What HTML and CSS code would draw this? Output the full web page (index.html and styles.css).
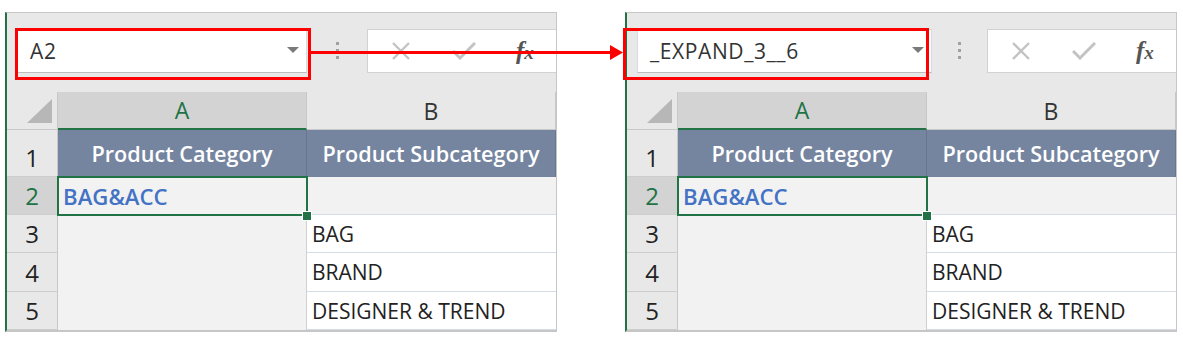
FILE: index.html
```html
<!DOCTYPE html>
<html lang="en">
<head>
  <meta charset="UTF-8" />
  <title>Name Box - Before / After</title>
  <link rel="stylesheet" href="styles.css">
</head>
<body>
  <div class="stage">

    <section class="sheet">
      <div class="toolbar">
        <div class="namebox narrow">
          <span>A2</span>
          <i class="caret"></i>
        </div>
        <div class="sep"><i></i><i></i><i></i></div>
        <div class="formula">
          <svg class="ico" width="20" height="18" viewBox="0 0 20 18"><path d="M2 1 L18 17 M18 1 L2 17" stroke="#c3c3c3" stroke-width="2.4" fill="none"/></svg>
          <svg class="ico" width="24" height="18" viewBox="0 0 24 18"><path d="M1 9 L8 16 L23 1" stroke="#c3c3c3" stroke-width="3" fill="none"/></svg>
          <span class="fx">f<small>x</small></span>
        </div>
      </div>
      <div class="grid">
        <div class="corner"><i></i></div>
        <div class="colhead on">A</div>
        <div class="colhead">B</div>

        <div class="rowhead">1</div>
        <div class="cell title">Product Category</div>
        <div class="cell title">Product Subcategory</div>

        <div class="rowhead on">2</div>
        <div class="cell shade sel">BAG&amp;ACC</div>
        <div class="cell shade colb"></div>

        <div class="rowhead">3</div>
        <div class="cell shade merged"></div>
        <div class="cell colb">BAG</div>
        <div class="rowhead">4</div>
        <div class="cell colb">BRAND</div>
        <div class="rowhead">5</div>
        <div class="cell colb">DESIGNER &amp; TREND</div>
      </div>
      <div class="callout left"></div>
    </section>

    <section class="sheet">
      <div class="toolbar">
        <div class="namebox wide">
          <span>_EXPAND_3__6</span>
          <i class="caret"></i>
        </div>
        <div class="sep"><i></i><i></i><i></i></div>
        <div class="formula">
          <svg class="ico" width="20" height="18" viewBox="0 0 20 18"><path d="M2 1 L18 17 M18 1 L2 17" stroke="#c3c3c3" stroke-width="2.4" fill="none"/></svg>
          <svg class="ico" width="24" height="18" viewBox="0 0 24 18"><path d="M1 9 L8 16 L23 1" stroke="#c3c3c3" stroke-width="3" fill="none"/></svg>
          <span class="fx">f<small>x</small></span>
        </div>
      </div>
      <div class="grid">
        <div class="corner"><i></i></div>
        <div class="colhead on">A</div>
        <div class="colhead">B</div>

        <div class="rowhead">1</div>
        <div class="cell title">Product Category</div>
        <div class="cell title">Product Subcategory</div>

        <div class="rowhead on">2</div>
        <div class="cell shade sel">BAG&amp;ACC</div>
        <div class="cell shade colb"></div>

        <div class="rowhead">3</div>
        <div class="cell shade merged"></div>
        <div class="cell colb">BAG</div>
        <div class="rowhead">4</div>
        <div class="cell colb">BRAND</div>
        <div class="rowhead">5</div>
        <div class="cell colb">DESIGNER &amp; TREND</div>
      </div>
      <div class="callout right"></div>
    </section>

    <!-- arrow from the first name box to the second -->
    <svg class="arrow" width="314" height="16" viewBox="0 0 314 16">
      <rect x="0" y="6" width="302" height="3" fill="#ff0000"/>
      <polygon points="300,0 313,7.5 300,15" fill="#ff0000"/>
    </svg>
  </div>
</body>
</html>
```

FILE: styles.css
```css
* {
  box-sizing: border-box;
}

body {
  margin: 0;
  background-color: #ffffff;
  font-family: "Open Sans", "Noto Sans", sans-serif;
  color: #222;
}

.stage {
  position: relative;
  display: flex;
  gap: 68px;
  padding: 12px 0 0 5px;
}

.sheet {
  position: relative;
  width: 552px;
  border-left: 2px solid #217346;
  border-top: 1px solid #c6c6c6;
  border-right: 1px solid #c6c6c6;
  border-bottom: 2px solid #c6c6c6;
}

/* formula bar row */
.toolbar {
  display: flex;
  align-items: flex-start;
  height: 79px;
  padding: 16px 0 0 10px;
  background-color: #e8e8e8;
}

.namebox {
  display: flex;
  align-items: center;
  justify-content: space-between;
  height: 44px;
  padding: 0 7px 0 12px;
  background-color: #fff;
  border: 1px solid #dadada;
  border-bottom-color: #bdbdbd;
  font-size: 21px;
  letter-spacing: 0.6px;
  color: #333;
}

.namebox.narrow {
  width: 290px;
}

.namebox.wide {
  width: 295px;
}

.caret {
  width: 0;
  height: 0;
  border-left: 6px solid transparent;
  border-right: 6px solid transparent;
  border-top: 6px solid #7a7a7a;
  margin-top: -3px;
}

.sep {
  flex: 1;
  display: flex;
  flex-direction: column;
  align-items: center;
  gap: 4px;
  padding-top: 13px;
}

.sep i {
  width: 3px;
  height: 3px;
  background-color: #a0a0a0;
}

.formula {
  display: flex;
  align-items: center;
  width: 189px;
  height: 44px;
  padding-left: 23px;
  gap: 41px;
  background-color: #fff;
  border: 1px solid #d2d2d2;
  border-right: none;
}

.ico {
  display: block;
}

.fx {
  margin-left: -1px;
  font-family: "Liberation Serif", serif;
  font-style: italic;
  font-weight: bold;
  font-size: 25px;
  color: #555;
}

.fx small {
  font-size: 19px;
}

/* sheet grid */
.grid {
  display: grid;
  grid-template-columns: 51px 249px 249px;
  grid-template-rows: 38px 47px 38px 38px 39px 38px;
}

.corner {
  display: flex;
  justify-content: flex-end;
  align-items: flex-end;
  padding: 0 5px 6px 0;
  background-color: #e8e8e8;
  border-right: 1px solid #c8c8c8;
  border-bottom: 1px solid #c8c8c8;
}

.corner i {
  width: 25px;
  height: 24px;
  background-color: #b7b7b7;
  clip-path: polygon(100% 0, 100% 100%, 0 100%);
}

.colhead {
  display: flex;
  align-items: center;
  justify-content: center;
  font-size: 23px;
  color: #333;
  background-color: #e8e8e8;
  border-right: 1px solid #c8c8c8;
  border-bottom: 1px solid #c8c8c8;
}

.colhead.on {
  background-color: #d3d3d3;
  color: #217346;
  border-bottom: 2px solid #217346;
}

.rowhead {
  grid-column: 1;
  display: flex;
  align-items: flex-end;
  justify-content: center;
  padding-bottom: 6px;
  font-size: 24px;
  line-height: 24px;
  background-color: #e8e8e8;
  border-right: 1px solid #c8c8c8;
  border-bottom: 1px solid #cdcdcd;
}

.rowhead.on {
  background-color: #d3d3d3;
  color: #217346;
}

.cell {
  display: flex;
  align-items: center;
  padding-left: 5px;
  font-size: 21px;
  background-color: #fff;
  border-right: 1px solid #d0d0d0;
}

.cell.title {
  justify-content: center;
  padding-left: 0;
  font-size: 21.6px;
  font-weight: 600;
  color: #fff;
  background-color: #7585a0;
  border-right-color: #68768f;
}

.cell.shade {
  background-color: #f2f2f2;
}

.cell.colb {
  grid-column: 3;
  border-bottom: 1px solid #d6dce6;
  border-right: none;
}

.cell.merged {
  grid-column: 2;
  grid-row: span 3;
}

.cell.sel {
  position: relative;
  z-index: 1;
  font-size: 22.2px;
  font-weight: 600;
  color: #4472c4;
  outline: 2px solid #217346;
  outline-offset: -1px;
}

.cell.sel::after {
  content: "";
  position: absolute;
  right: -5px;
  bottom: -5px;
  width: 8px;
  height: 8px;
  background-color: #217346;
  box-shadow: 0 0 0 1px #fff;
}

/* red annotation boxes */
.callout {
  position: absolute;
  top: 15px;
  height: 52px;
  border: 3px solid #ff0000;
}

.callout.left {
  left: 8px;
  width: 296px;
}

.callout.right {
  left: -4px;
  width: 306px;
}

.arrow {
  position: absolute;
  left: 310px;
  top: 45px;
}
```
